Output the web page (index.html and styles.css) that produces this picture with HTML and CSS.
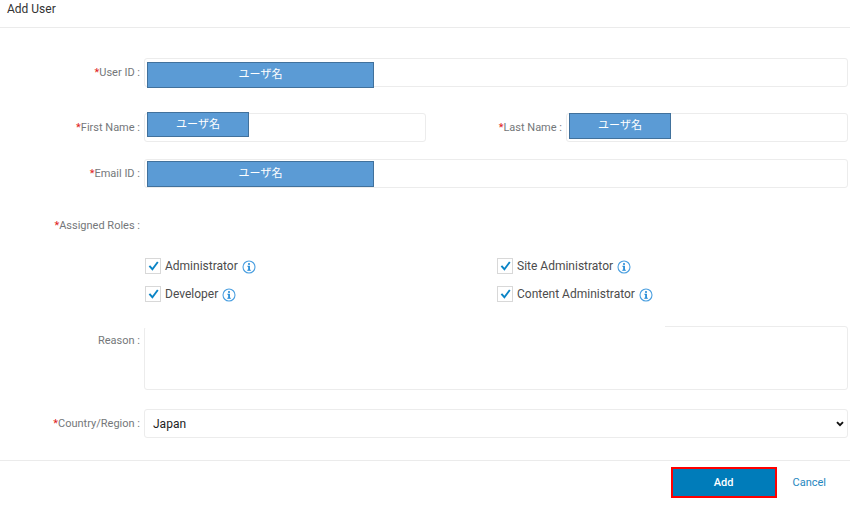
FILE: index.html
```html
<!DOCTYPE html>
<html lang="en">

<head>
    <meta charset="UTF-8">
    <meta name="viewport" content="width=device-width, initial-scale=1.0">
    <title>Add User</title>
    <link rel="stylesheet" href="styles.css">
</head>

<body>
    <svg class="sprite" aria-hidden="true">
        <symbol id="info" viewBox="0 0 14 14">
            <circle cx="7" cy="7" r="6" fill="none" stroke="#4a9fe0" stroke-width="1.1" />
            <circle cx="7" cy="3.9" r="1" fill="#1c87d6" />
            <path d="M5.4 5.8h2.5v4h.9v.9H5.3v-.9h.9V6.7h-.8z" fill="#1c87d6" />
        </symbol>
    </svg>

    <header class="header">
        <h1>Add User</h1>
    </header>

    <form action="#">
        <main class="fields">
            <div class="row user-row">
                <label class="name" for="userId"><span class="star">*</span>User ID :</label>
                <div class="field">
                    <input type="text" id="userId" required>
                    <span class="mask mask-wide mask-low">ユーザ名</span>
                </div>
            </div>

            <div class="row row-pair">
                <label class="name" for="firstName"><span class="star">*</span>First Name :</label>
                <div class="field">
                    <input type="text" id="firstName" required>
                    <span class="mask mask-high">ユーザ名</span>
                </div>
                <label class="name" for="lastName"><span class="star">*</span>Last Name :</label>
                <div class="field">
                    <input type="text" id="lastName" required>
                    <span class="mask">ユーザ名</span>
                </div>
            </div>

            <div class="row email-row">
                <label class="name" for="email"><span class="star">*</span>Email ID :</label>
                <div class="field">
                    <input type="text" id="email" required>
                    <span class="mask mask-wide">ユーザ名</span>
                </div>
            </div>

            <div class="row roles-title">
                <span class="name" id="rolesLabel"><span class="star">*</span>Assigned Roles :</span>
            </div>

            <div class="roles" role="group" aria-labelledby="rolesLabel">
                <div class="role">
                    <input type="checkbox" id="admin" checked>
                    <label for="admin">Administrator</label>
                    <svg class="info"><use href="#info" /></svg>
                </div>
                <div class="role">
                    <input type="checkbox" id="siteAdmin" checked>
                    <label for="siteAdmin">Site Administrator</label>
                    <svg class="info"><use href="#info" /></svg>
                </div>
                <div class="role">
                    <input type="checkbox" id="developer" checked>
                    <label for="developer">Developer</label>
                    <svg class="info"><use href="#info" /></svg>
                </div>
                <div class="role">
                    <input type="checkbox" id="contentAdmin" checked>
                    <label for="contentAdmin">Content Administrator</label>
                    <svg class="info"><use href="#info" /></svg>
                </div>
            </div>

            <div class="row reason-row">
                <label class="name" for="reason">Reason :</label>
                <div class="field">
                    <textarea id="reason"></textarea>
                    <span class="cover"></span>
                </div>
            </div>

            <div class="row country-row">
                <label class="name" for="country"><span class="star">*</span>Country/Region :</label>
                <div class="field">
                    <select id="country" required>
                        <option>Japan</option>
                    </select>
                    <svg class="arrow" viewBox="0 0 8 6"><path d="M1 1.2l3 3 3-3" fill="none" stroke="#111" stroke-width="1.9" /></svg>
                </div>
            </div>
        </main>

        <footer class="footer">
            <button type="submit" class="add">Add</button>
            <a href="#" class="cancel">Cancel</a>
        </footer>
    </form>
</body>

</html>
```
FILE: styles.css
```css
* {
    box-sizing: border-box;
}

body {
    margin: 0;
    background-color: #ffffff;
    font-family: Roboto, 'Noto Sans CJK JP', sans-serif;
    font-size: 12px;
    color: #4c4c4c;
}

.sprite {
    display: none;
}

.header {
    height: 28px;
    padding: 0 7px;
    border-bottom: 1px solid #ebebeb;
}

.header h1 {
    margin: 0;
    font-size: 12px;
    line-height: 18px;
    font-weight: normal;
    color: #333333;
}

.fields {
    padding: 30px 2px 22px 0;
}

.row {
    display: grid;
    grid-template-columns: 140px 1fr;
    column-gap: 4px;
    align-items: center;
}

.row-pair {
    grid-template-columns: 140px 1fr 132px 1fr;
    margin: 26px 0 17px;
}

.name {
    font-size: 11px;
    line-height: 16px;
    color: #74777a;
    text-align: right;
}

.star {
    color: #e02020;
}

.field {
    position: relative;
    display: flex;
}

.field input,
.field textarea,
.field select {
    width: 100%;
    height: 29px;
    margin: 0;
    padding: 0 8px;
    border: 1px solid #ececec;
    border-radius: 3px;
    background-color: #ffffff;
    font-family: inherit;
    font-size: 12px;
    color: #222222;
}

.field textarea {
    height: 64px;
    resize: none;
}

.field select {
    appearance: none;
}

/* hides the user's data */
.mask {
    position: absolute;
    top: 0;
    left: 3px;
    width: 102px;
    height: 26px;
    border: 1px solid #41719c;
    background-color: #5b9bd5;
    font-size: 11px;
    line-height: 24px;
    color: #ffffff;
    text-align: center;
}

.mask-wide {
    top: 2px;
    width: 227px;
}

.mask-low {
    top: 4px;
}

.mask-high {
    top: -1px;
    height: 25px;
}

.roles-title {
    margin-top: 30px;
}

.roles {
    display: grid;
    grid-template-columns: 1fr 1fr;
    row-gap: 12px;
    margin: 24px 0 24px 144px;
}

.role {
    display: flex;
    align-items: center;
    height: 16px;
}

.role input {
    appearance: none;
    width: 16px;
    height: 16px;
    margin: 0 4px 0 1px;
    border: 1px solid #d8d8d8;
    background-color: #ffffff;
}

.role input:checked {
    background-image: url("data:image/svg+xml,%3Csvg xmlns='http://www.w3.org/2000/svg' viewBox='0 0 14 14'%3E%3Cpath d='M3.4 6.8l3 3.4 5.4-7.2' fill='none' stroke='%230a84c6' stroke-width='1.9'/%3E%3C/svg%3E");
}

.info {
    width: 14px;
    height: 14px;
    margin: 2px 0 0 4px;
}

.reason-row {
    align-items: start;
}

.reason-row .name {
    padding-top: 7px;
}

.cover {
    position: absolute;
    top: 0;
    left: 0;
    width: 74%;
    height: 2px;
    background-color: #ffffff;
}

.country-row {
    margin-top: 19px;
}

.arrow {
    position: absolute;
    top: 12px;
    right: 4px;
    width: 8px;
    height: 6px;
    pointer-events: none;
}

.footer {
    display: flex;
    justify-content: flex-end;
    align-items: center;
    gap: 16px;
    padding: 6px 24px 8px 0;
    border-top: 1px solid #ebebeb;
}

.add {
    width: 106px;
    height: 31px;
    padding: 0;
    border: 2px solid #ff0000;
    background-color: #007cba;
    font-family: inherit;
    font-size: 11px;
    font-weight: 500;
    color: #ffffff;
    cursor: pointer;
}

.cancel {
    font-size: 11px;
    color: #1f87c0;
    text-decoration: none;
}

.cancel:hover {
    text-decoration: underline;
}
```
